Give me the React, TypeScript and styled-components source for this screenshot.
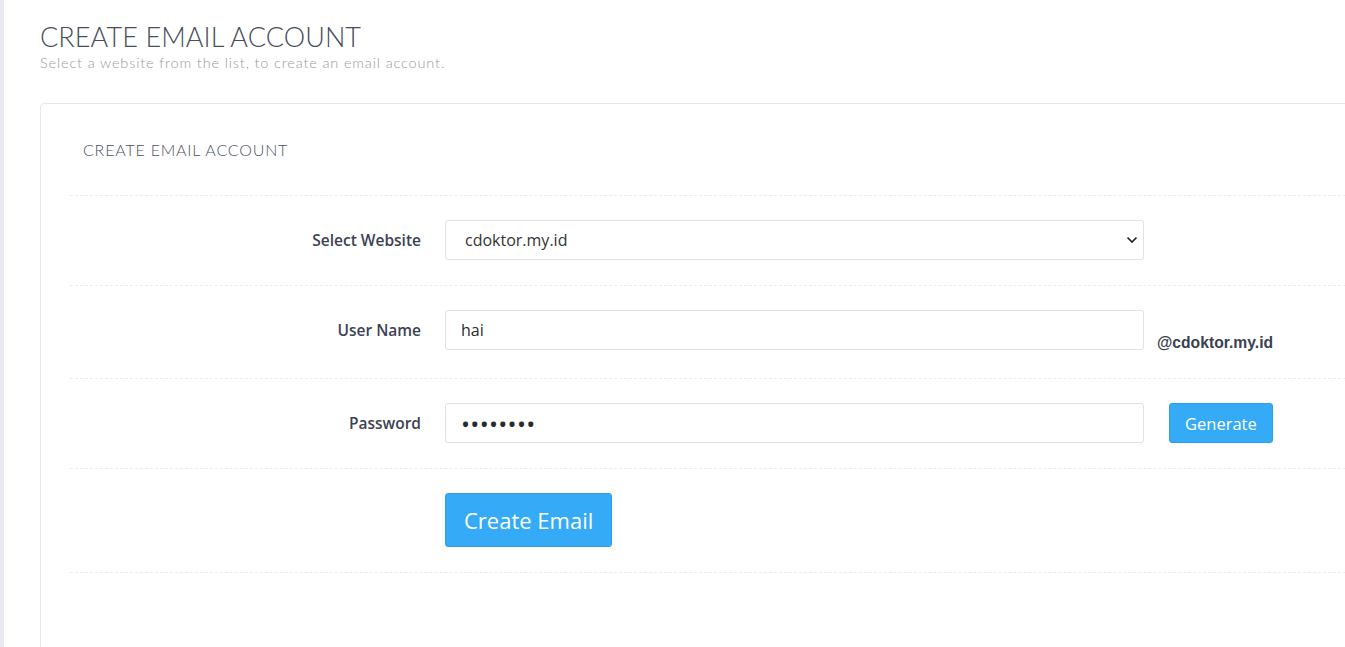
import React from 'react';
import styled, { createGlobalStyle } from 'styled-components';

const GlobalStyle = createGlobalStyle`
  html, body {
    margin: 0;
    padding: 0;
    background: #fff;
    overflow: hidden;
  }
  body {
    font-family: "Open Sans", "Liberation Sans", sans-serif;
  }
`;

const Page = styled.div`
  display: flex;
  min-height: 647px;
`;

const SideStrip = styled.div`
  width: 4px;
  flex: none;
  background: #e9e9f2;
`;

const Content = styled.main`
  flex: 1;
  padding: 21px 0 0 36px;
  min-width: 0;
`;

const Title = styled.h1`
  margin: 0;
  font-family: "Lato", sans-serif;
  font-weight: 300;
  font-size: 27px;
  line-height: 32px;
  color: #474d5a;
  letter-spacing: 0.1px;
`;

const Subtitle = styled.p`
  margin: 0;
  font-family: "Lato", sans-serif;
  font-weight: 300;
  font-size: 14.5px;
  line-height: 20px;
  color: #999;
  letter-spacing: 0.85px;
`;

const Panel = styled.section`
  margin-top: 30px;
  width: calc(100% + 40px);
  border: 1px solid #e6e6e6;
  border-radius: 4px;
  min-height: 560px;
`;

const PanelHeading = styled.h2`
  margin: 0;
  padding: 35px 42px;
  font-family: "Lato", sans-serif;
  font-weight: 300;
  font-size: 16px;
  line-height: 21px;
  letter-spacing: 0.8px;
  color: #4d525d;
`;

const PanelBody = styled.div`
  margin-left: 29px;
  border-top: 1px dashed #ececec;
`;

const Row = styled.div`
  display: grid;
  grid-template-columns: 351px 699px auto;
  column-gap: 24px;
  align-items: start;
  padding: 24px 0 25px;
  border-bottom: 1px dashed #ececec;
`;

const Label = styled.label`
  text-align: right;
  font-weight: 600;
  font-size: 15.5px;
  line-height: 40px;
  color: #3b4252;
`;

const Field = styled.input<{ $secret?: boolean }>`
  box-sizing: border-box;
  width: 100%;
  height: 40px;
  padding: 0 15px;
  border: 1px solid #e1e1e1;
  border-radius: 3px;
  font-family: "Open Sans", sans-serif;
  font-size: ${(p) => (p.$secret ? '24px' : '16px')};
  letter-spacing: ${(p) => (p.$secret ? '0.3px' : 'normal')};
  color: #2a2a2a;
  background: #fff;
  outline: none;
`;

const SelectWrap = styled.div`
  position: relative;
`;

const Select = styled.select`
  box-sizing: border-box;
  width: 100%;
  height: 40px;
  padding: 0 30px 0 19px;
  border: 1px solid #e1e1e1;
  border-radius: 3px;
  font-family: "Open Sans", sans-serif;
  font-size: 16px;
  color: #333;
  background: #fff;
  appearance: none;
  outline: none;
`;

const Chevron = styled.svg`
  position: absolute;
  right: 6px;
  top: 16px;
  pointer-events: none;
`;

const Suffix = styled.span`
  margin-left: -11px;
  padding-top: 23px;
  font-family: "Liberation Sans", Arial, sans-serif;
  font-weight: 700;
  font-size: 15.7px;
  line-height: 20px;
  color: #3a4250;
`;

const Button = styled.button<{ $big?: boolean }>`
  box-sizing: border-box;
  height: ${(p) => (p.$big ? '54px' : '40px')};
  padding: ${(p) => (p.$big ? '0 18px' : '0 15px')};
  margin-left: ${(p) => (p.$big ? '0' : '1px')};
  border: 1px solid #2c9fec;
  border-radius: 3px;
  background: #35abf8;
  color: #fff;
  font-family: "Open Sans", sans-serif;
  font-size: ${(p) => (p.$big ? '22px' : '16.5px')};
  cursor: pointer;
  justify-self: start;
  box-shadow: ${(p) => (p.$big ? '0 0 0 3px #fffaf2' : 'none')};
`;

const Spacer = styled.div``;

export default function App() {
  return (
    <>
      <GlobalStyle />
      <Page>
        <SideStrip />
        <Content>
          <Title>CREATE EMAIL ACCOUNT</Title>
          <Subtitle>Select a website from the list, to create an email account.</Subtitle>
          <Panel>
            <PanelHeading>CREATE EMAIL ACCOUNT</PanelHeading>
            <PanelBody>
              <Row>
                <Label>Select Website</Label>
                <SelectWrap>
                  <Select defaultValue="cdoktor.my.id">
                    <option value="cdoktor.my.id">cdoktor.my.id</option>
                  </Select>
                  <Chevron width="12" height="8" viewBox="0 0 12 8">
                    <path d="M1.5 1.5 L6 6 L10.5 1.5" fill="none" stroke="#222" strokeWidth="1.6" />
                  </Chevron>
                </SelectWrap>
              </Row>
              <Row>
                <Label>User Name</Label>
                <Field type="text" defaultValue="hai" />
                <Suffix>@cdoktor.my.id</Suffix>
              </Row>
              <Row>
                <Label>Password</Label>
                <Field type="password" $secret defaultValue="12345678" />
                <Button>Generate</Button>
              </Row>
              <Row>
                <Spacer />
                <Button $big>Create Email</Button>
              </Row>
            </PanelBody>
          </Panel>
        </Content>
      </Page>
    </>
  );
}
